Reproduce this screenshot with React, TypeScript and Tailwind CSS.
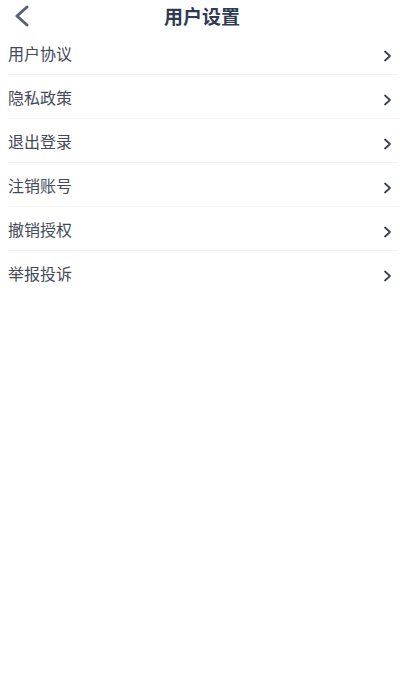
const items = ['用户协议', '隐私政策', '退出登录', '注销账号', '撤销授权', '举报投诉'];

const font = { fontFamily: '"Noto Sans CJK SC", "Noto Sans", sans-serif' };

const Chevron = () => (
  <svg width="9" height="12" viewBox="0 0 9 12" fill="none" className="mt-[6px]">
    <path d="M2 1.5 L7 6 L2 10.5" stroke="#3b4152" strokeWidth="1.8" strokeLinecap="round" strokeLinejoin="round" />
  </svg>
);

export default function App() {
  return (
    <div className="w-[400px] h-[700px] bg-white" style={font}>
      <div className="relative h-[31px] flex items-center justify-center">
        <svg className="absolute left-[13px] top-[5px]" width="18" height="22" viewBox="0 0 18 22" fill="none">
          <path d="M14 2 L4 11 L14 20" stroke="#5a6176" strokeWidth="3" strokeLinecap="round" strokeLinejoin="round" />
        </svg>
        <span className="text-[19px] font-bold text-[#2f3a55] leading-none ml-[4px]">用户设置</span>
      </div>
      <div className="pl-2 pr-[2px]">
        {items.map((t) => (
          <div key={t} className="h-[44px] pr-[6px] flex items-center justify-between border-b border-[#f3f4f6] last:border-b-0">
            <span className="text-[16px] text-[#444a5a] leading-none">{t}</span>
            <Chevron />
          </div>
        ))}
      </div>
    </div>
  );
}
